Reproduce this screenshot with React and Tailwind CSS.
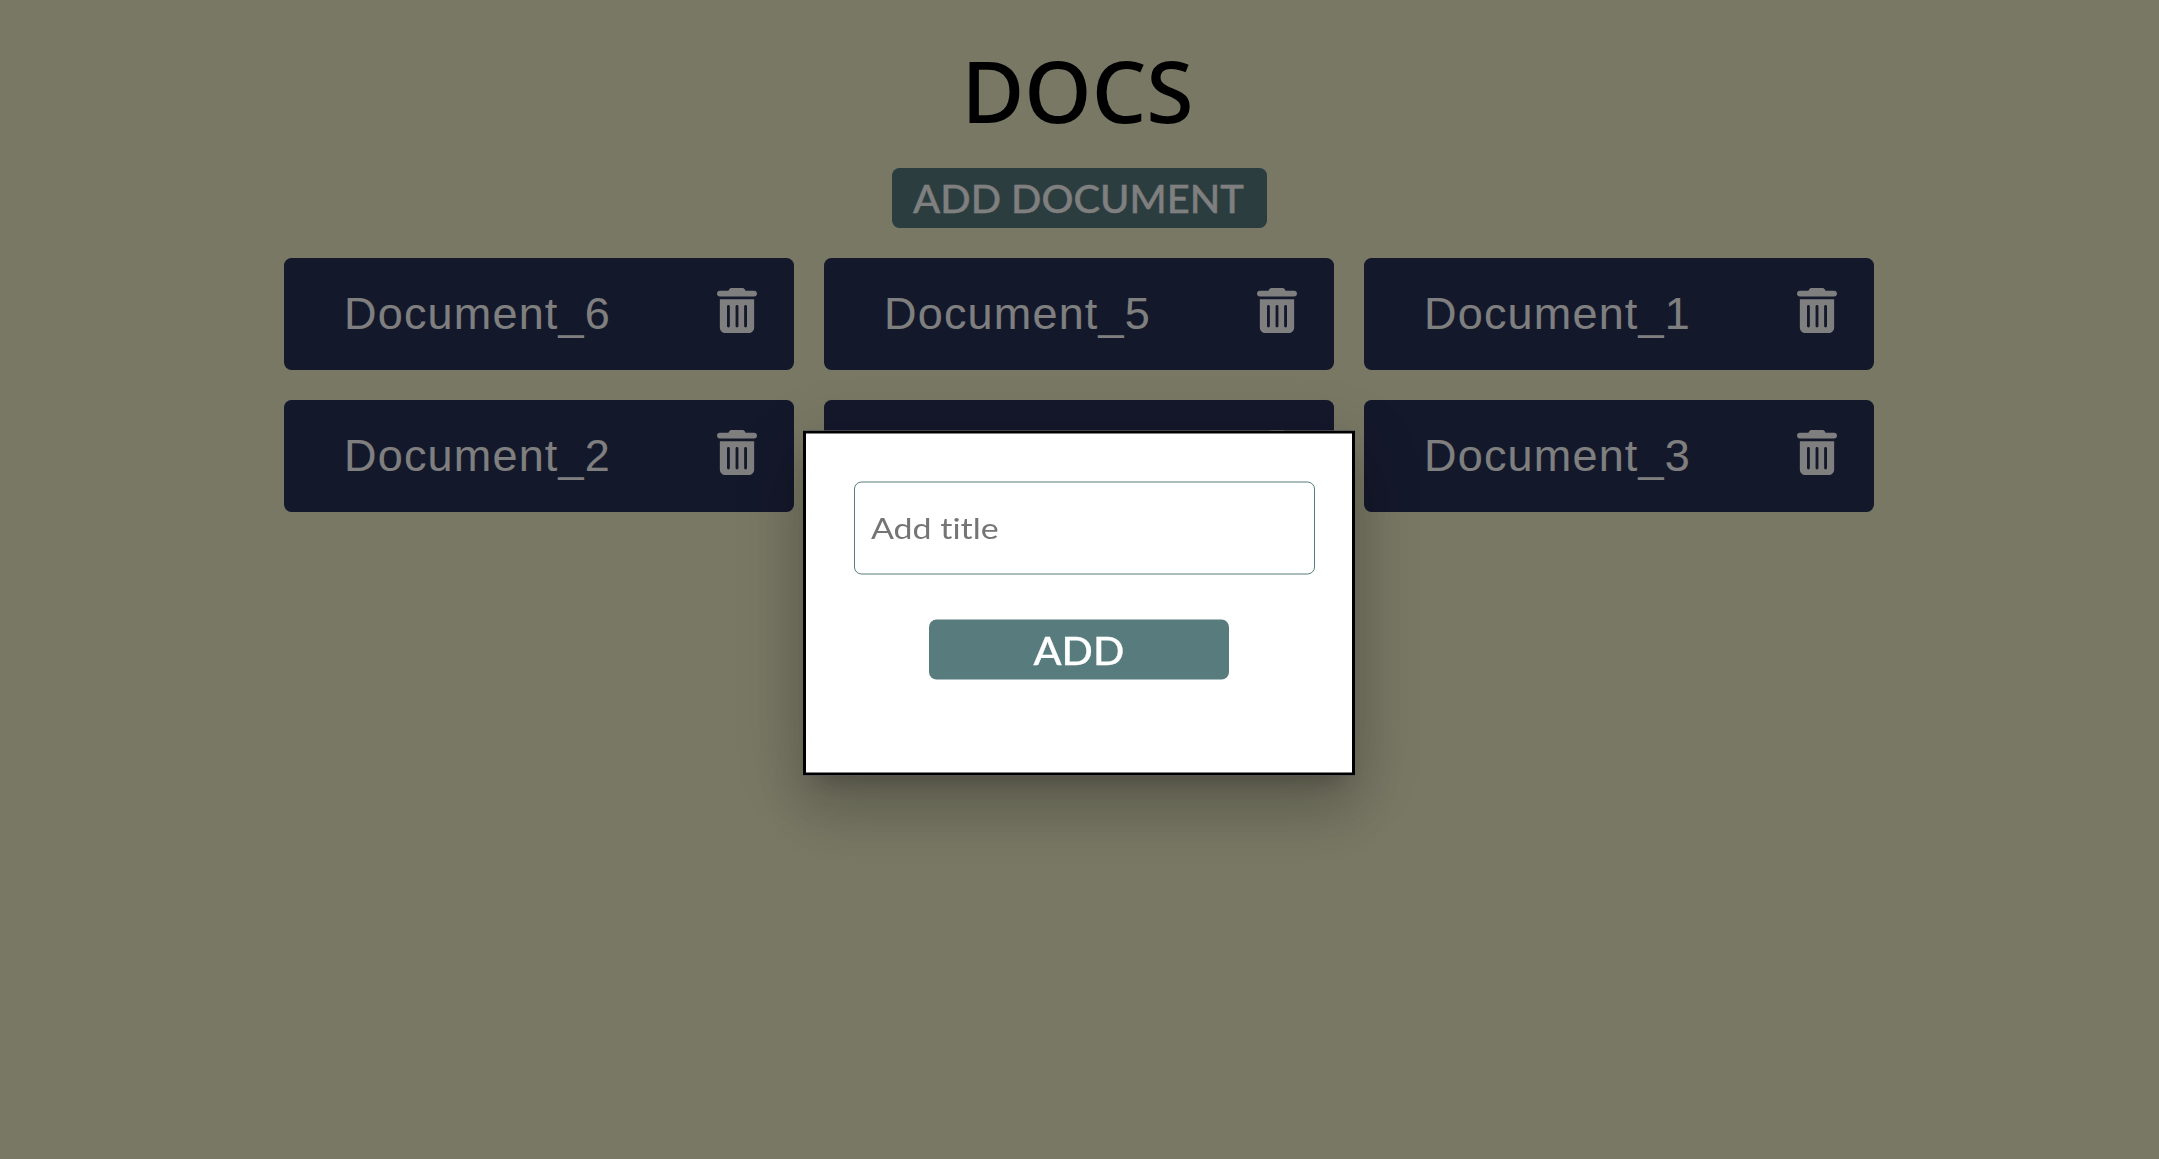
import { useState } from "react";

const DOCUMENTS = ["Document_6", "Document_5", "Document_1", "Document_2", "Document_4", "Document_3"];

function TrashIcon() {
  return (
    <svg viewBox="0 0 448 512" preserveAspectRatio="none" fill="currentColor" className="block h-[45px] w-10">
      <path d="M135.2 17.7C140.6 6.8 151.7 0 163.8 0H284.2c12.1 0 23.2 6.8 28.6 17.7L320 32h96c17.7 0 32 14.3 32 32s-14.3 32-32 32H32C14.3 96 0 81.7 0 64S14.3 32 32 32h96l7.2-14.3zM32 128H416V448c0 35.3-28.7 64-64 64H96c-35.3 0-64-28.7-64-64V128zm96 64c-8.800 0-16 7.200-16 16V432c0 8.800 7.200 16 16 16s16-7.200 16-16V208c0-8.800-7.200-16-16-16zm96 0c-8.800 0-16 7.200-16 16V432c0 8.800 7.200 16 16 16s16-7.200 16-16V208c0-8.800-7.200-16-16-16zm96 0c-8.800 0-16 7.200-16 16V432c0 8.800 7.200 16 16 16s16-7.200 16-16V208c0-8.800-7.200-16-16-16z" />
    </svg>
  );
}

function DocumentCard({ name }) {
  return (
    <article className="flex h-28 items-center justify-between rounded-[7.5px] bg-[#283056] pr-[37px] pl-[60px] text-white">
      <h2 className="font-['Liberation_Sans',sans-serif] text-[45px] leading-[50px] tracking-[1.18px]">{name}</h2>
      <button type="button" aria-label={`Delete ${name}`} className="pb-[7px]">
        <TrashIcon />
      </button>
    </article>
  );
}

function AddDialog() {
  const [title, setTitle] = useState("");
  return (
    <div className="fixed inset-0 bg-black/50">
      <form
        onSubmit={(e) => e.preventDefault()}
        className="absolute top-[603px] left-[1079px] flex h-[345px] w-[552px] -translate-x-1/2 -translate-y-1/2 flex-col gap-[45px] border-[3px] border-black bg-white p-12 shadow-[0_16.5px_22.5px_-10.5px_rgba(0,0,0,0.2),0_36px_57px_4.5px_rgba(0,0,0,0.14),0_13.5px_69px_12px_rgba(0,0,0,0.12)]"
      >
        <label className="relative flex h-[93px] w-[461px] shrink-0 items-center rounded-[7.5px] border border-[#587b7e] px-4 pb-0.5 font-['Lato',sans-serif] text-[29px]">
          {title === "" && (
            <span className="origin-left scale-x-[1.17] leading-[36px] text-[#757575] [font-variant-ligatures:none]">Add title</span>
          )}
          <input
            aria-label="Title"
            value={title}
            onChange={(e) => setTitle(e.target.value)}
            className="absolute inset-0 bg-transparent px-4 outline-none"
          />
        </label>
        <button
          type="submit"
          className="h-[60px] w-[300px] shrink-0 self-center rounded-[7.5px] bg-[#587b7e] font-['Lato',sans-serif] text-[38px] leading-[60px] font-medium text-white"
        >
          <span className="inline-block scale-x-[1.085] [-webkit-text-stroke:0.3px_currentColor]">ADD</span>
        </button>
      </form>
    </div>
  );
}

export default function App() {
  return (
    <div className="min-h-screen bg-[#f2f0ca]">
      <main className="ml-[284px] flex w-[1590px] flex-col items-center pt-[31px]">
        <h1 className="mr-[3px] font-['Noto_Sans',sans-serif] text-[86px] leading-[117px] font-medium text-black">DOCS</h1>
        <button
          type="button"
          className="mt-5 h-[60px] w-[375px] rounded-[7.5px] bg-[#587b7e] font-['Lato',sans-serif] text-[38px] leading-[60px] font-medium whitespace-nowrap text-white"
        >
          <span className="inline-block scale-x-[1.05] [-webkit-text-stroke:0.3px_currentColor]">ADD DOCUMENT</span>
        </button>
        <section className="mt-[30px] grid w-full grid-cols-3 gap-[30px]">
          {DOCUMENTS.map((name) => (
            <DocumentCard key={name} name={name} />
          ))}
        </section>
      </main>
      <AddDialog />
    </div>
  );
}
